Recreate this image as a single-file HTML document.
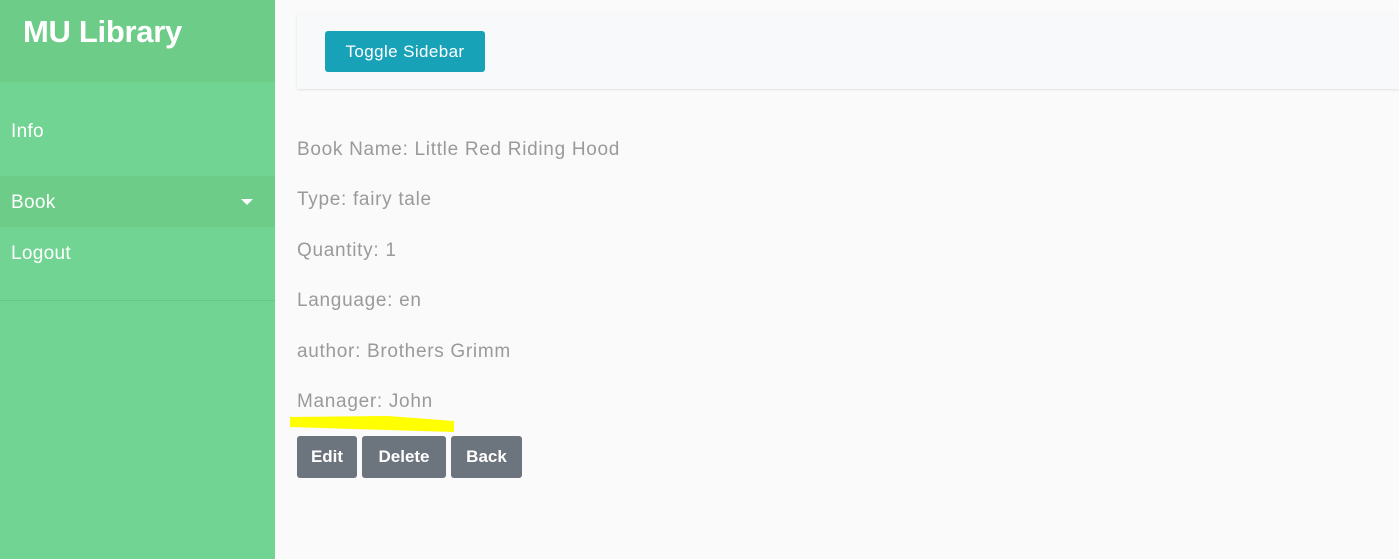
<!DOCTYPE html>
<html><head><style>
body{margin:0;width:1399px;height:559px;background:#fafafa;font-family:"Liberation Sans",sans-serif;position:relative;overflow:hidden}
.sb{position:absolute;left:0;top:0;width:275px;height:559px;background:#72d493}
.hd{height:82px;background:#6dcc88;color:#fff;font-size:31px;padding-left:23px;line-height:64px;font-weight:bold;letter-spacing:-0.3px}
.it{position:absolute;left:11px;color:#fff;font-size:19px;letter-spacing:0.3px}
.bk{position:absolute;left:0;top:176px;width:275px;height:51px;background:#6dcc88}
.nav{position:absolute;left:297px;top:13px;width:1102px;height:76px;background:#f8f9fa;box-shadow:0 1px 2px rgba(0,0,0,.1)}
.tg{position:absolute;left:28px;top:18px;width:160px;height:41px;background:#17a2b8;border-radius:3px;color:#fff;font-size:17px;line-height:41px;text-align:center;letter-spacing:0.4px}
.p{position:absolute;left:297px;color:#9a9a9a;font-size:19px;letter-spacing:0.7px}
.b{position:absolute;top:436px;height:42px;background:#6c757d;color:#fff;border-radius:3px;font-size:17px;line-height:41px;text-align:center;font-weight:bold}
</style></head><body>
<div class="sb">
<div class="hd">MU Library</div>
<div class="it" style="top:121px">Info</div>
<div class="bk"></div>
<div class="it" style="top:192px">Book</div>
<div style="position:absolute;left:241px;top:199px;width:0;height:0;border-left:6px solid transparent;border-right:6px solid transparent;border-top:6px solid #fff"></div>
<div class="it" style="top:243px">Logout</div>
<div style="position:absolute;left:0;top:300px;width:275px;height:1px;background:#68c585"></div>
</div>
<div class="nav"><div class="tg">Toggle Sidebar</div></div>
<div class="p" style="top:139px">Book Name: Little Red Riding Hood</div>
<div class="p" style="top:189px">Type: fairy tale</div>
<div class="p" style="top:240px">Quantity: 1</div>
<div class="p" style="top:290px">Language: en</div>
<div class="p" style="top:341px">author: Brothers Grimm</div>
<div class="p" style="top:391px">Manager: John</div>
<svg style="position:absolute;left:288px;top:410px" width="170" height="25"><path d="M2 7 L100 6 L166 11 L166 22 L100 20 L2 17Z" fill="#ffff00"/></svg>
<div class="b" style="left:297px;width:60px">Edit</div>
<div class="b" style="left:362px;width:84px">Delete</div>
<div class="b" style="left:451px;width:71px">Back</div>
</body></html>
